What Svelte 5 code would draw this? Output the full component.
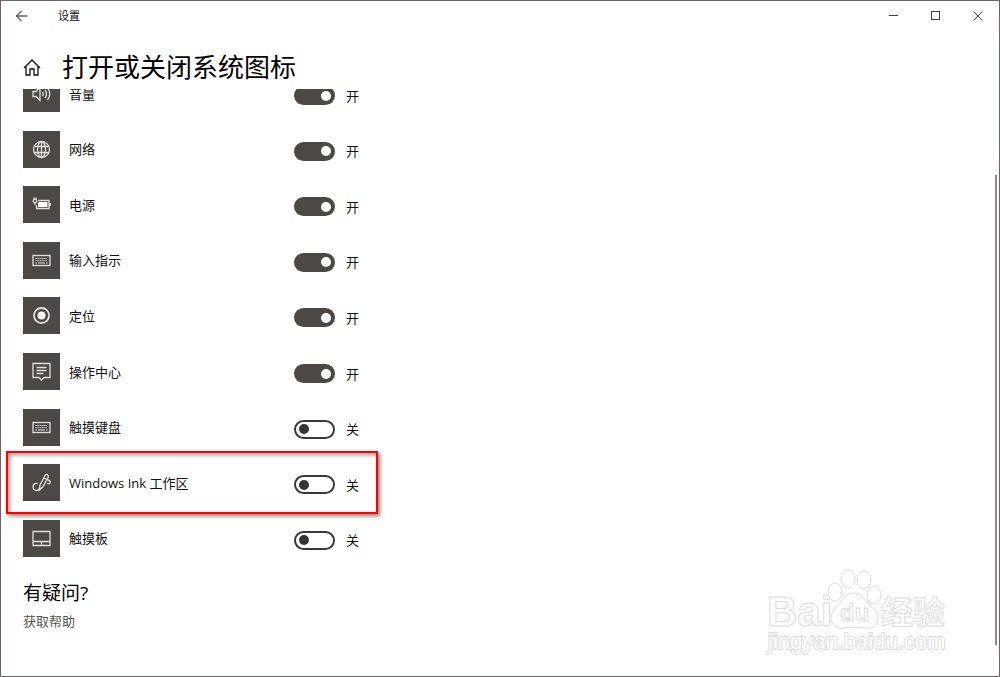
<script>
  let items = $state([
    { id: "volume", name: "音量", on: true },
    { id: "network", name: "网络", on: true },
    { id: "power", name: "电源", on: true },
    { id: "input", name: "输入指示", on: true },
    { id: "location", name: "定位", on: true },
    { id: "action", name: "操作中心", on: true },
    { id: "keyboard", name: "触摸键盘", on: false },
    { id: "ink", name: "Windows Ink 工作区", on: false, marked: true },
    { id: "touchpad", name: "触摸板", on: false },
  ]);
</script>

{#snippet keyboard()}
  <rect x="1" y="4.5" width="17" height="10" />
  <path d="M3.5 7.5h12M3.5 9.7h12" stroke-width="1" stroke-dasharray="1.3 .7" />
  <path d="M3.5 12h1.5M6 12h7M14 12h1.5" stroke-width="1" />
{/snippet}

<div class="window">
  <header class="titlebar">
    <button type="button" class="back" aria-label="返回">
      <svg viewBox="0 0 12 12" width="12" height="12"><path d="M.5 6h11M5.5 1l-5 5 5 5" /></svg>
    </button>
    <span class="app">设置</span>
    <div class="caption">
      <button type="button" aria-label="最小化"><svg viewBox="0 0 10 10" width="10" height="10"><path d="M0 4.5h9" /></svg></button>
      <button type="button" aria-label="最大化"><svg viewBox="0 0 10 10" width="10" height="10"><rect x=".5" y=".5" width="8" height="8" /></svg></button>
      <button type="button" aria-label="关闭"><svg viewBox="0 0 10 10" width="10" height="10"><path d="M.5.5l9 9M9.5.5l-9 9" /></svg></button>
    </div>
  </header>

  <div class="heading">
    <button type="button" class="home" aria-label="主页">
      <svg viewBox="0 0 18 18" width="18" height="18"><path d="M1 10L9 2l8 8M3 8.500v8.500h4v-6h4v6h4V8.500" /></svg>
    </button>
    <h1>打开或关闭系统图标</h1>
  </div>

  <main>
    <ul class="list">
      {#each items as item (item.id)}
        <li class="row" class:marked={item.marked}>
          <span class="tile">
            <svg viewBox="0 0 19 19" width="19" height="19" aria-hidden="true">
              {#if item.id === "volume"}
                <path d="M1 7.5h3l4-4v13l-4-4H1zM10.5 8q1.5 2 0 4M13 6q3 4 0 8M15.5 4q4.5 6 0 12" />
              {:else if item.id === "network"}
                <circle cx="9.5" cy="9.5" r="8" />
                <ellipse cx="9.5" cy="9.5" rx="4" ry="8" />
                <path d="M9.5 1.5v16M2.5 6.5h14M2.5 12.5h14" />
              {:else if item.id === "power"}
                <path d="M6.5 5.5H17v8H4.5V10M18.2 8v3" />
                <rect class="solid" x="6" y="7" width="9.5" height="5" />
                <circle cx="3" cy="6" r="1.8" />
                <path d="M2 2.5v2M4 2.5v2M3 8v2" />
              {:else if item.id === "input" || item.id === "keyboard"}
                {@render keyboard()}
              {:else if item.id === "location"}
                <circle cx="9.5" cy="9.5" r="7.5" stroke-width="1.8" />
                <circle class="solid" cx="9.5" cy="9.5" r="4" />
              {:else if item.id === "action"}
                <path d="M1 1.5h17v14h-6L9.5 18 7 15.5H1zM4.5 5.5h10M4.5 8.5h10M4.5 11.5h7" />
              {:else if item.id === "ink"}
                <path d="M7.5 17l.3-4.5L13 2.500q1-1.500 2.400-.8 1.400.8.8 2.500L11 13.500z" />
                <path d="M12 5l3 1.500" />
                <path d="M5.500 10.500Q1 10 1 14q.2 3.500 3.500 3.500 2.500 0 3.300-3" />
                <path d="M15.500 7q2.700-.2 2.700 2 0 2.700-3.200 1.500" />
              {:else}
                <path d="M1 2.5h17v14H1zM1 12.5h17M9.5 12.5v4" />
              {/if}
            </svg>
          </span>
          <label class="name" for={item.id}>{item.name}</label>
          <span class="control">
            <input id={item.id} type="checkbox" role="switch" bind:checked={item.on} />
            <span class="state">{item.on ? "开" : "关"}</span>
          </span>
        </li>
      {/each}
    </ul>

    <section class="help">
      <h2>有疑问?</h2>
      <a href="#help">获取帮助</a>
    </section>
  </main>

  <div class="scrollbar"></div>

  <svg class="watermark" viewBox="0 0 188 100" width="188" height="100">
    <text x="2" y="60" font-size="42">Bai</text>
    <ellipse cx="70" cy="26" rx="7" ry="9" />
    <ellipse cx="83" cy="13" rx="7" ry="9" />
    <ellipse cx="99" cy="14" rx="7" ry="9" />
    <ellipse cx="109" cy="29" rx="7" ry="9" />
    <path d="M89 27c7 0 10 5 14 10s10 9 10 15c0 8-6 11-12 10-8-1-15-1-22 0-7 1-13-3-13-10 0-6 5-10 9-15s7-10 14-10z" />
    <text x="75" y="55" font-size="24">du</text>
    <text x="116" y="58" font-size="32">经验</text>
    <text class="url" x="3" y="83" font-size="22">jingyan.baidu.com</text>
  </svg>
</div>

<style>
  :global(body) { margin: 0; background: #fff; }
  .window { position: relative; box-sizing: border-box; min-height: 100vh; display: flex; flex-direction: column; background: #fff; border: 1px solid #6f6266; color: #111; font: 13px/20px "Open Sans", "Noto Sans CJK SC", sans-serif; overflow: hidden; }
  button { display: inline-flex; align-items: center; justify-content: center; border: none; background: none; padding: 0; color: inherit; }
  svg { display: block; fill: none; stroke: currentColor; stroke-width: 1; }

  .titlebar { display: flex; align-items: center; height: 30px; }
  .back { width: 42px; height: 30px; }
  .app { margin-left: 15px; font-size: 11px; }
  .caption { display: flex; margin-left: auto; color: #444; }
  .caption button { width: 42px; height: 30px; }

  .heading { display: flex; align-items: center; height: 44px; padding: 14px 22px 0; }
  .home svg { stroke-width: 1.3; }
  .heading h1 { margin: 0 0 0 21px; font-size: 26px; line-height: 44px; font-weight: 400; color: #000; }

  main { flex: 1; overflow: hidden; padding: 0 22px; }
  .list { list-style: none; display: grid; grid-auto-rows: 1fr; min-height: 500px; max-width: 360px; margin: -23px 0 0; padding: 0; }
  .row { position: relative; display: flex; align-items: center; }
  .tile { display: flex; align-items: center; justify-content: center; width: 37px; height: 37px; background: #4c4845; color: #e2e0df; }
  .tile svg { stroke-width: 1.3; }
  .tile svg .solid { fill: #fff; stroke: none; }
  .name { width: 225px; margin-left: 9px; }
  .control { display: flex; align-items: center; padding-top: 4px; }
  .control input { appearance: none; box-sizing: border-box; display: flex; align-items: center; width: 41px; height: 19px; margin: 0; padding: 0 3px; border: 2px solid #393939; border-radius: 10px; background: #fff; }
  .control input::before { content: ""; width: 10px; height: 10px; border-radius: 50%; background: #333; }
  .control input:checked { justify-content: flex-end; padding-right: 2px; border-color: #4c4845; background: #4c4845; }
  .control input:checked::before { background: #fff; }
  .state { margin-left: 11px; }
  .marked::after { content: ""; position: absolute; inset: -4px 5px -4px -17px; border: 2px solid #f00; box-shadow: 2px 2px 4px rgba(0, 0, 0, 0.5), inset 2px 2px 4px rgba(0, 0, 0, 0.4); pointer-events: none; }

  .help { padding-top: 13px; }
  .help h2 { margin: 0 0 4px; font-size: 19px; line-height: 28px; font-weight: 400; color: #000; }
  .help a { color: #555; text-decoration: none; }

  .scrollbar { position: absolute; top: 174px; right: 2px; bottom: 31px; width: 2px; background: #888; }
  .watermark { position: absolute; right: 46px; bottom: 10px; fill: #fff; stroke: #dcdcdc; pointer-events: none; }
  .watermark text { font-family: "Liberation Sans", "Noto Sans CJK SC", sans-serif; font-weight: 700; }
  .watermark .url { font-weight: 400; stroke-width: 2; paint-order: stroke; }
</style>
